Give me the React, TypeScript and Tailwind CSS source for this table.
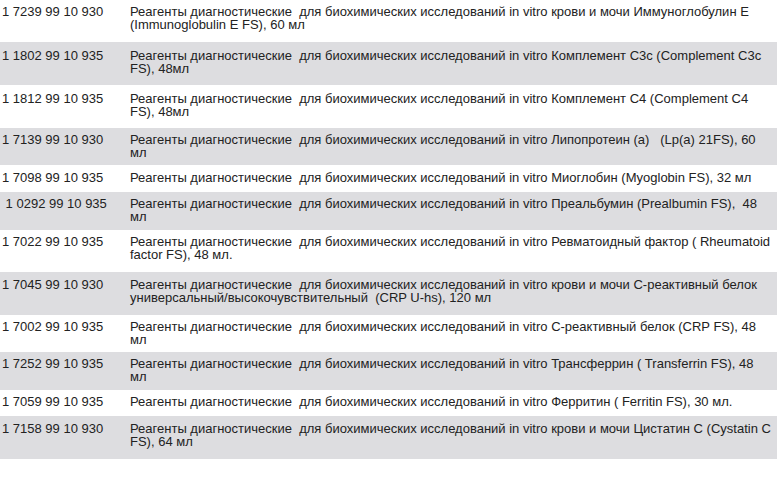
const rows = [
  { code: "1 7239 99 10 930", text: "Реагенты диагностические  для биохимических исследований in vitro крови и мочи Иммуноглобулин Е\n(Immunoglobulin E FS), 60 мл", h: "h-[42px]", pt: "pt-[5px]", grey: false },
  { code: "1 1802 99 10 935", text: "Реагенты диагностические  для биохимических исследований in vitro Комплемент С3с (Complement C3c\nFS), 48мл", h: "h-[43px]", pt: "pt-[7px]", grey: true },
  { code: "1 1812 99 10 935", text: "Реагенты диагностические  для биохимических исследований in vitro Комплемент С4 (Complement C4\nFS), 48мл", h: "h-[43px]", pt: "pt-[7px]", grey: false },
  { code: "1 7139 99 10 930", text: "Реагенты диагностические  для биохимических исследований in vitro Липопротеин (а)   (Lp(a) 21FS), 60\nмл", h: "h-[37px]", pt: "pt-[5px]", grey: true },
  { code: "1 7098 99 10 935", text: "Реагенты диагностические  для биохимических исследований in vitro Миоглобин (Myoglobin FS), 32 мл", h: "h-[27px]", pt: "pt-[6px]", grey: false },
  { code: " 1 0292 99 10 935", text: "Реагенты диагностические  для биохимических исследований in vitro Преальбумин (Prealbumin FS),  48\nмл", h: "h-[38px]", pt: "pt-[5px]", grey: true },
  { code: "1 7022 99 10 935", text: "Реагенты диагностические  для биохимических исследований in vitro Ревматоидный фактор ( Rheumatoid\nfactor FS), 48 мл.", h: "h-[42px]", pt: "pt-[5px]", grey: false },
  { code: "1 7045 99 10 930", text: "Реагенты диагностические  для биохимических исследований in vitro крови и мочи С-реактивный белок\nуниверсальный/высокочувствительный  (CRP U-hs), 120 мл", h: "h-[43px]", pt: "pt-[6px]", grey: true },
  { code: "1 7002 99 10 935", text: "Реагенты диагностические  для биохимических исследований in vitro С-реактивный белок (CRP FS), 48\nмл", h: "h-[37px]", pt: "pt-[5px]", grey: false },
  { code: "1 7252 99 10 935", text: "Реагенты диагностические  для биохимических исследований in vitro Трансферрин ( Transferrin FS), 48\nмл", h: "h-[38px]", pt: "pt-[5px]", grey: true },
  { code: "1 7059 99 10 935", text: "Реагенты диагностические  для биохимических исследований in vitro Ферритин ( Ferritin FS), 30 мл.", h: "h-[26px]", pt: "pt-[5px]", grey: false },
  { code: "1 7158 99 10 930", text: "Реагенты диагностические  для биохимических исследований in vitro крови и мочи Цистатин С (Cystatin C\nFS), 64 мл", h: "h-[43px]", pt: "pt-[6px]", grey: true },
];

export default function App() {
  return (
    <div className="w-[777px] h-[486px] bg-white text-[#222222] text-[13px] leading-[13px] font-['Liberation_Sans',Arial,sans-serif] overflow-hidden">
      {rows.map((r, i) => (
        <div key={i} className={`flex ${r.h} ${r.pt} ${r.grey ? "bg-[#dddde0]" : "bg-white"}`}>
          <div className="w-[130px] shrink-0 pl-[2px] whitespace-pre">{r.code}</div>
          <div className="flex-1 whitespace-pre">{r.text}</div>
        </div>
      ))}
    </div>
  );
}
